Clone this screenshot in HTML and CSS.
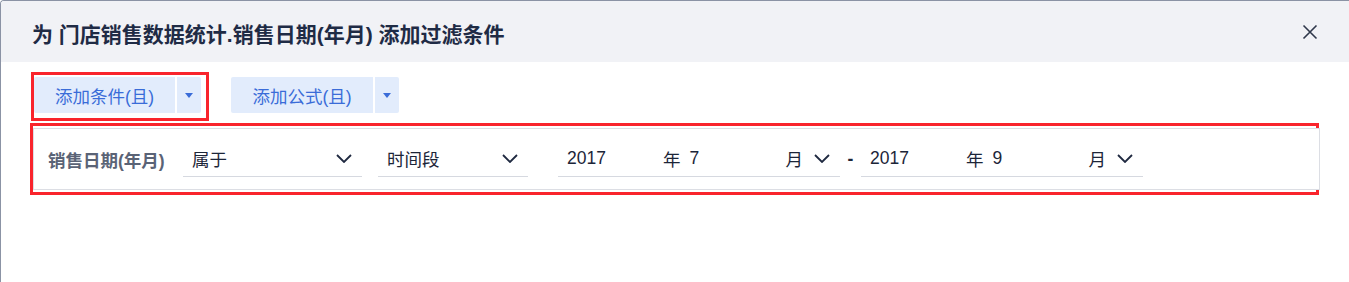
FILE: index.html
```html
<!DOCTYPE html>
<html lang="zh-CN">
<head>
    <meta charset="UTF-8">
    <title>添加过滤条件</title>
    <link rel="stylesheet" href="styles.css">
</head>
<body>
    <div class="dialog">
        <div class="dialog-header">
            <div class="dialog-title">为 门店销售数据统计.销售日期(年月) 添加过滤条件</div>
            <button class="close-btn" title="关闭">
                <svg width="16" height="16" viewBox="0 0 16 16"><path d="M1.5 1.5L14.5 14.5M14.5 1.5L1.5 14.5" stroke="#2f384b" stroke-width="1.6" fill="none"/></svg>
            </button>
        </div>

        <div class="toolbar">
            <div class="mark mark-btn">
                <div class="split-btn">
                    <button class="split-main">添加条件(且)</button>
                    <button class="split-arrow"><span class="tri"></span></button>
                </div>
            </div>
            <div class="split-btn second">
                <button class="split-main">添加公式(且)</button>
                <button class="split-arrow"><span class="tri"></span></button>
            </div>
        </div>

        <div class="mark mark-card">
            <div class="filter-card">
                <div class="field-label">销售日期(年月)</div>

                <div class="select select-op">
                    <span class="select-text">属于</span>
                    <svg class="chevron" width="16" height="9" viewBox="0 0 16 9"><polyline points="1,1 8,8 15,1" stroke="#1f2940" stroke-width="1.8" fill="none"/></svg>
                </div>

                <div class="select select-type">
                    <span class="select-text">时间段</span>
                    <svg class="chevron" width="16" height="9" viewBox="0 0 16 9"><polyline points="1,1 8,8 15,1" stroke="#1f2940" stroke-width="1.8" fill="none"/></svg>
                </div>

                <div class="select date">
                    <span class="year">2017</span>
                    <span>年</span>
                    <span class="month">7</span>
                    <span>月</span>
                    <svg class="chevron" width="16" height="9" viewBox="0 0 16 9"><polyline points="1,1 8,8 15,1" stroke="#1f2940" stroke-width="1.8" fill="none"/></svg>
                </div>

                <div class="dash">-</div>

                <div class="select date">
                    <span class="year">2017</span>
                    <span>年</span>
                    <span class="month">9</span>
                    <span>月</span>
                    <svg class="chevron" width="16" height="9" viewBox="0 0 16 9"><polyline points="1,1 8,8 15,1" stroke="#1f2940" stroke-width="1.8" fill="none"/></svg>
                </div>
            </div>
        </div>
    </div>
</body>
</html>
```

FILE: styles.css
```css
:root {
    --border-dark: #8b93a5;
    --header-bg: #f1f2f6;
    --title-color: #1f2b45;
    --btn-bg: #e2ecfc;
    --btn-text: #3a6cd8;
    --mark-red: #f9242c;
    --card-border: #dcdee4;
    --line: #d6d9e0;
    --label: #5a6376;
    --text: #1c2538;
}

* {
    margin: 0;
    padding: 0;
    box-sizing: border-box;
}

body {
    background: #ffffff;
    font-family: 'Liberation Sans', 'Noto Sans CJK SC', sans-serif;
    color: var(--text);
    overflow: hidden;
}

.dialog {
    height: 282px;
    border-left: 1px solid var(--border-dark);
    border-top: 1px solid var(--border-dark);
    border-top-left-radius: 4px;
    background: #ffffff;
}

.dialog-header {
    height: 61px;
    background: var(--header-bg);
    display: flex;
    align-items: center;
    justify-content: space-between;
    padding: 0 31px 0 31px;
    border-top-left-radius: 3px;
}

.dialog-title {
    font-size: 21px;
    font-weight: bold;
    color: var(--title-color);
    margin-top: 2px;
}

button {
    border: none;
    outline: none;
    background: none;
    font-family: inherit;
    cursor: pointer;
}

.close-btn {
    width: 16px;
    height: 16px;
    display: flex;
}

/* toolbar */
.toolbar {
    display: flex;
    align-items: flex-start;
    padding: 10px 0 0 30px;
}

.mark {
    border: 3px solid var(--mark-red);
}

.mark-btn {
    padding: 2px 5px 5px 0;
}

.split-btn {
    display: flex;
    height: 36px;
    gap: 2px;
}

.split-btn.second {
    margin: 5px 0 0 22px;
}

.split-main {
    width: 141px;
    height: 36px;
    background: var(--btn-bg);
    color: var(--btn-text);
    font-size: 17.5px;
    border-radius: 2px 0 0 2px;
    padding-top: 1px;
}

.split-btn.second .split-main {
    width: 142px;
}

.split-arrow {
    width: 24px;
    height: 36px;
    background: var(--btn-bg);
    display: flex;
    align-items: center;
    justify-content: center;
    border-radius: 0 2px 2px 0;
}

.tri {
    width: 0;
    height: 0;
    border-left: 4px solid transparent;
    border-right: 4px solid transparent;
    border-top: 5px solid var(--btn-text);
    margin-top: 1px;
}

/* filter row */
.mark-card {
    margin: 2px 0 0 29px;
    width: 1289px;
    padding: 2px 0 2px 0;
}

.filter-card {
    height: 62px;
    margin-right: -4px;
    border: 1px solid var(--card-border);
    background: #ffffff;
    display: flex;
    align-items: center;
    padding-left: 14px;
}

.field-label {
    width: 135px;
    font-size: 17.5px;
    font-weight: bold;
    color: var(--label);
}

.select {
    height: 35px;
    border-bottom: 1px solid var(--line);
    display: flex;
    align-items: center;
    padding: 0 10px 0 9px;
    font-size: 17.5px;
    color: var(--text);
}

.select-text {
    flex: 1;
}

.select-op {
    width: 179px;
    margin-right: 16px;
}

.select-type {
    width: 150px;
    margin-right: 30px;
}

.date {
    width: 282px;
    padding-right: 10px;
}

.year {
    width: 96px;
}

.month {
    flex: 1;
    margin-left: 9px;
}

.date .chevron {
    margin-left: 11px;
}

.dash {
    width: 21px;
    text-align: center;
    font-size: 17.5px;
    font-weight: bold;
    color: var(--text);
}

.chevron {
    display: block;
}
```
